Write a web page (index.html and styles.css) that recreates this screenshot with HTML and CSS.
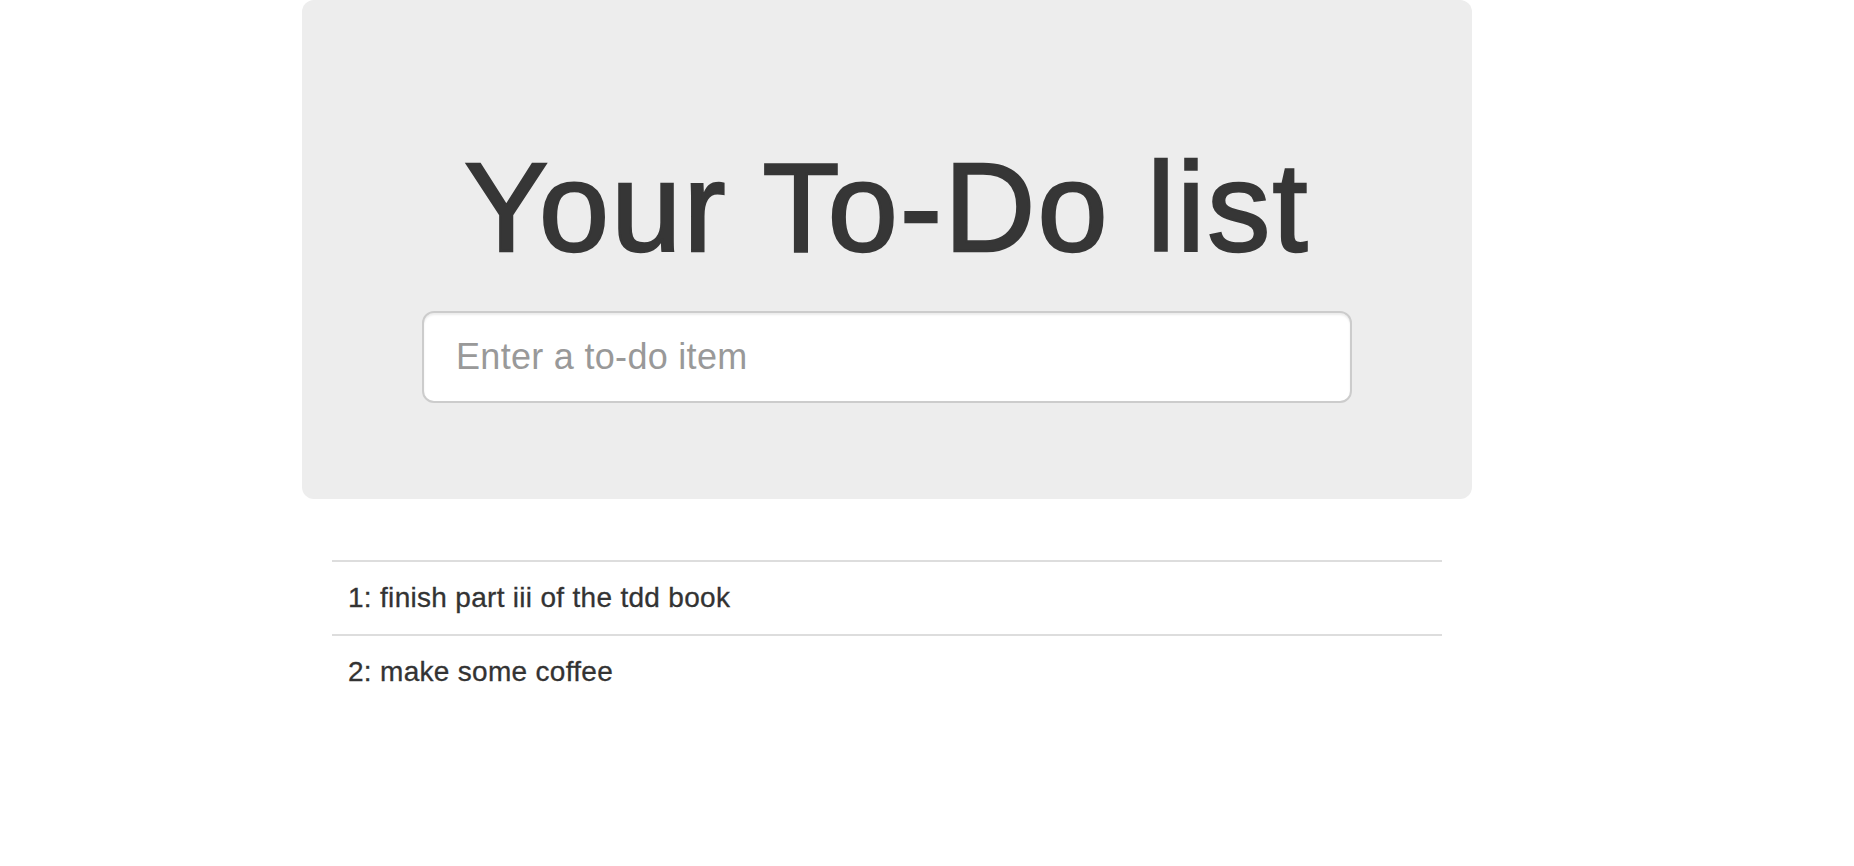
FILE: index.html
```html
<!DOCTYPE html>
<html lang="en">
<head>
<meta charset="utf-8">
<title>To-Do lists</title>
<link rel="stylesheet" href="styles.css">
</head>
<body>
<div class="container">
  <div class="jumbotron">
    <h1 class="title">Your To-Do list</h1>
    <form class="todo-form">
      <input class="todo-input" type="text" name="item_text" placeholder="Enter a to-do item">
    </form>
  </div>
  <table class="todo-table">
    <tr><td>1: finish part iii of the tdd book</td></tr>
    <tr><td>2: make some coffee</td></tr>
  </table>
</div>
</body>
</html>
```

FILE: styles.css
```css
html, body {
  margin: 0;
  padding: 0;
  background: #fff;
}
body {
  font-family: "Liberation Sans", Arial, Helvetica, sans-serif;
  color: #333;
  font-size: 28px;
  line-height: 1.42857;
}
.container {
  width: 1170px;
  margin-left: 302px;
}
.jumbotron {
  background: #ededed;
  border-radius: 12px;
  padding: 96px 0 96px;
  display: flex;
  flex-direction: column;
  align-items: center;
}
.title {
  margin: 43px 0 33px;
  font-size: 126px;
  font-weight: 500;
  line-height: 1.1;
  color: #363636;
  letter-spacing: 2.2px;
  -webkit-text-stroke: 2.4px #363636;
  text-align: center;
}
.todo-form {
  margin: 0;
  width: 930px;
}
.todo-input {
  display: block;
  box-sizing: border-box;
  width: 100%;
  height: 92px;
  padding: 20px 32px;
  border: 2px solid #ccc;
  border-radius: 12px;
  background: #fff;
  box-shadow: inset 0 2px 2px rgba(0, 0, 0, 0.075);
  font-family: "Liberation Sans", Arial, Helvetica, sans-serif;
  font-size: 36px;
  line-height: 48px;
  letter-spacing: 0.3px;
  color: #555;
  outline: none;
}
.todo-input::placeholder {
  color: #999;
}
.todo-table {
  margin: 61px 30px 0;
  width: 1110px;
  border-collapse: collapse;
  border-spacing: 0;
}
.todo-table td {
  padding: 16px;
  border-top: 2px solid #ddd;
  line-height: 40px;
  letter-spacing: 0.3px;
  -webkit-text-stroke: 0.3px #333;
  color: #333;
}
```
